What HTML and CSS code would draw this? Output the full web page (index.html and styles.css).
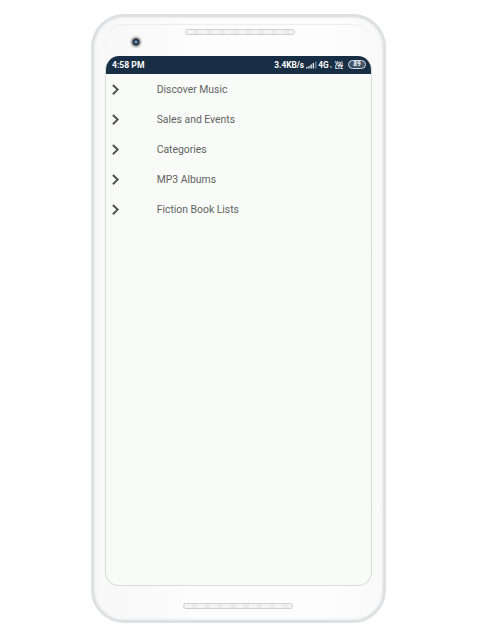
FILE: index.html
```html
<!DOCTYPE html>
<html lang="en">
<head>
<meta charset="utf-8">
<title>Tree view</title>
<link rel="stylesheet" href="styles.css">
</head>
<body>
<div class="phone">
  <div class="top-bezel">
    <div class="contour"></div>
    <span class="camera"></span>
    <span class="speaker"></span>
  </div>
  <main class="screen">
    <header class="status">
      <span class="time">4:58 PM</span>
      <span class="speed">3.4KB/s</span>
      <svg class="signal" width="11" height="8" viewBox="0 0 11 8"><path d="M0 6h1.5v1.6H0zM2.2 5h1.5v2.6H2.2zM4.4 3.6h1.5v4H4.4zM6.6 2h1.5v5.6H6.6z" fill="#dce2e7"/><path d="M9 .4h1.5v7.2H9z" fill="#697b8b"/></svg>
      <span class="network">4G</span>
      <span class="dot"></span>
      <span class="volte"><span>Vo)</span><span>LTE</span></span>
      <span class="battery">89</span>
    </header>
    <ul class="tree">
      <li><svg class="chevron" width="8" height="12" viewBox="0 0 8 12"><path d="M.9 1 5.6 5.6.9 10.2"/></svg><span>Discover Music</span></li>
      <li><svg class="chevron" width="8" height="12" viewBox="0 0 8 12"><path d="M.9 1 5.6 5.6.9 10.2"/></svg><span>Sales and Events</span></li>
      <li><svg class="chevron" width="8" height="12" viewBox="0 0 8 12"><path d="M.9 1 5.6 5.6.9 10.2"/></svg><span>Categories</span></li>
      <li><svg class="chevron" width="8" height="12" viewBox="0 0 8 12"><path d="M.9 1 5.6 5.6.9 10.2"/></svg><span>MP3 Albums</span></li>
      <li><svg class="chevron" width="8" height="12" viewBox="0 0 8 12"><path d="M.9 1 5.6 5.6.9 10.2"/></svg><span>Fiction Book Lists</span></li>
    </ul>
  </main>
  <div class="bottom-bezel"><span class="speaker"></span></div>
</div>
</body>
</html>
```
FILE: styles.css
```css
* { box-sizing: border-box; }
body {
  margin: 0;
  height: 640px;
  overflow: hidden;
  background: #fff;
  font-family: Roboto, "Liberation Sans", sans-serif;
}
.phone {
  width: 295px;
  height: 609px;
  margin: 14px 0 0 91px;
  border: 3px solid #dfe0e1;
  border-radius: 33px;
  background: linear-gradient(90deg, #f8f8f8, #fafafa 22%, #fdfdfd 35%, #fdfdfd 80%, #f9f9f9);
  box-shadow: inset 0 0 3px #dedfe0;
  display: flex;
  flex-direction: column;
}
.top-bezel {
  position: relative;
  height: 39px;
  flex: none;
  display: flex;
  align-items: flex-start;
}
.contour {
  position: absolute;
  left: 11px;
  right: 11px;
  top: 7px;
  height: 20px;
  border-top: 1px solid #ededed;
  border-radius: 24px 24px 0 0;
}
.camera {
  width: 12px;
  height: 12px;
  margin: 19px 0 0 36px;
  border-radius: 50%;
  background: radial-gradient(circle at center, #6f95b8 0 1px, #26394c 2px 3px, #5f656b 3.6px, #d0cdca 4.6px);
}
.speaker {
  width: 110px;
  height: 6px;
  border: 1px solid #cfd0d0;
  border-radius: 3px;
  background: repeating-linear-gradient(90deg, #f4f4f4 0 7px, #ebebeb 8px 13px);
}
.top-bezel .speaker { margin: 12px 0 0 43px; }
.screen {
  width: 267px;
  height: 530px;
  margin-left: 11px;
  flex: none;
  border: 1px solid #d9dcda;
  border-top: 0;
  border-radius: 14px;
  overflow: hidden;
  background: #f8fbf8;
}
.status {
  height: 18px;
  padding: 0 5px 0 6px;
  display: flex;
  align-items: center;
  background: #172e45;
  color: #fff;
  font-size: 8px;
  line-height: 18px;
  font-weight: 700;
  white-space: nowrap;
}
.time { width: 163px; font-size: 8.6px; }
.speed { width: 32px; font-size: 8.3px; }
.signal { margin-right: 1px; flex: none; }
.network { width: 11px; font-size: 8.3px; }
.dot { width: 2px; height: 2px; margin: 4px 3px 0 1px; background: #70808f; }
.volte {
  width: 9px;
  margin-right: 4px;
  display: flex;
  flex-direction: column;
  font-size: 5px;
  line-height: 4.5px;
}
.battery {
  width: 18px;
  height: 9px;
  margin-bottom: 2px;
  border: 1px solid #d0d7dd;
  border-radius: 5px;
  background: #40556a;
  text-align: center;
  font-size: 6.5px;
  line-height: 7px;
}
.tree { margin: 1px 0 0; padding: 0; list-style: none; }
.tree li {
  height: 30px;
  padding-left: 6px;
  display: flex;
  align-items: center;
  color: #626362;
  font-size: 10.4px;
  line-height: 14px;
  white-space: nowrap;
}
.chevron { margin-right: 36.7px; fill: none; stroke: #505250; stroke-width: 2; }
.bottom-bezel { flex: 1; }
.bottom-bezel .speaker { display: block; margin: 17px 0 0 89px; }
```
